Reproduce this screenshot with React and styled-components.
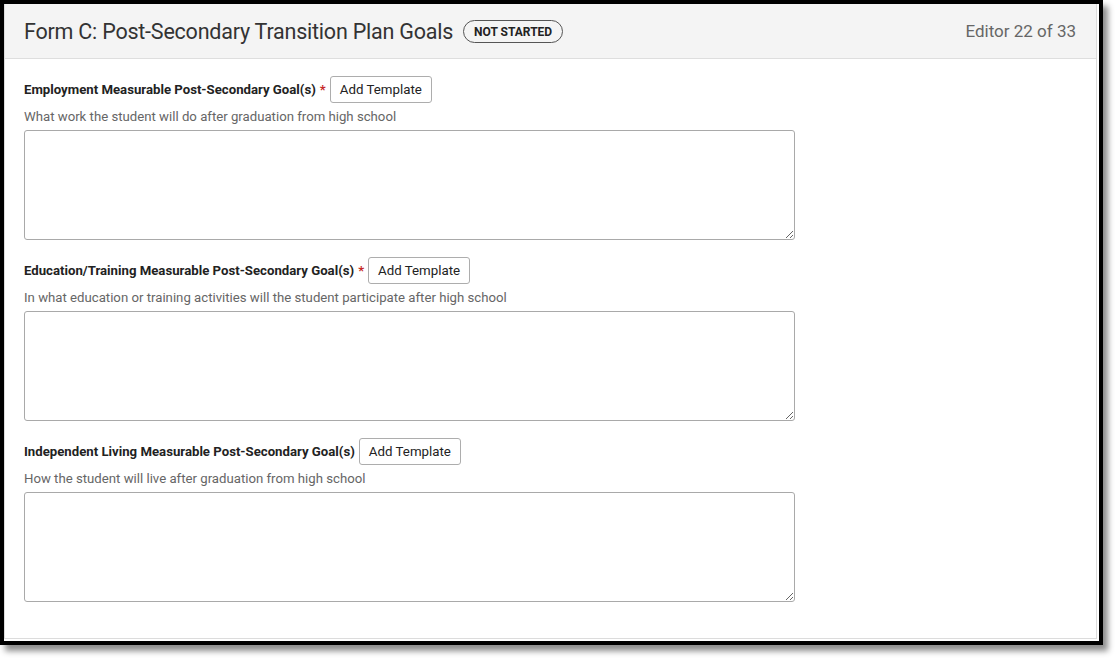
import React from "react";
import styled, { createGlobalStyle } from "styled-components";

const Global = createGlobalStyle`
  html, body { margin: 0; padding: 0; background: #fff; }
  body { font-family: Roboto, "Noto Sans", sans-serif; width: 1116px; height: 661px; overflow: hidden; }
  * { box-sizing: border-box; }
`;

const Frame = styled.div`
  width: 1103px;
  height: 645px;
  border: 4px solid #000;
  background: #fff;
  box-shadow: 5px 6px 6px rgba(0, 0, 0, 0.45);
  padding: 0 2px 2px 0;
  display: flex;
`;

const Panel = styled.div`
  flex: 1;
  border: 1px solid #dcdcdc;
  border-top: none;
  display: flex;
  flex-direction: column;
  background: #fff;
`;

const Header = styled.div`
  height: 55px;
  background: #f4f4f4;
  border-bottom: 1px solid #dedede;
  display: flex;
  align-items: center;
  padding: 0 20px 0 19px;
  gap: 10px;
`;

const Title = styled.h1`
  margin: 0;
  font-size: 21.5px;
  font-weight: 400;
  color: #333;
  letter-spacing: -0.22px;
`;

const Badge = styled.span`
  border: 1px solid #555;
  border-radius: 12px;
  height: 23px;
  padding: 0 10px;
  display: inline-flex;
  align-items: center;
  font-size: 12px;
  font-weight: 700;
  color: #222;
  margin-top: 1px;
`;

const Counter = styled.span`
  margin-left: auto;
  font-size: 17px;
  color: #666;
`;

const Body = styled.div`
  padding: 17px 19px 0 19px;
  display: flex;
  flex-direction: column;
  gap: 17px;
`;

const Field = styled.div`
  display: flex;
  flex-direction: column;
`;

const LabelRow = styled.div`
  display: flex;
  align-items: center;
  height: 27px;
`;

const Label = styled.label`
  font-size: 13.2px;
  font-weight: 700;
  color: #222;
`;

const Required = styled.span`
  color: #c62828;
  font-weight: 700;
  margin-left: 4px;
  font-size: 13px;
`;

const Button = styled.button`
  margin-left: 4px;
  height: 27px;
  padding: 0 9px;
  border: 1px solid #adadad;
  border-radius: 3px;
  background: #fff;
  font-family: Roboto, sans-serif;
  font-size: 13.3px;
  color: #222;
`;

const Help = styled.div`
  margin-top: 6px;
  font-size: 13.2px;
  line-height: 16px;
  color: #666;
`;

const Area = styled.textarea`
  margin-top: 5px;
  width: 771px;
  height: 110px;
  border: 1px solid #a9a9a9;
  border-radius: 3px;
  resize: vertical;
  font-family: Roboto, sans-serif;
`;

const fields = [
  {
    label: "Employment Measurable Post-Secondary Goal(s)",
    required: true,
    help: "What work the student will do after graduation from high school",
  },
  {
    label: "Education/Training Measurable Post-Secondary Goal(s)",
    required: true,
    help: "In what education or training activities will the student participate after high school",
  },
  {
    label: "Independent Living Measurable Post-Secondary Goal(s)",
    required: false,
    help: "How the student will live after graduation from high school",
  },
];

export default function App() {
  return (
    <>
      <Global />
      <Frame>
        <Panel>
          <Header>
            <Title>Form C: Post-Secondary Transition Plan Goals</Title>
            <Badge>NOT STARTED</Badge>
            <Counter>Editor 22 of 33</Counter>
          </Header>
          <Body>
            {fields.map((f) => (
              <Field key={f.label}>
                <LabelRow>
                  <Label>{f.label}</Label>
                  {f.required && <Required>*</Required>}
                  <Button>Add Template</Button>
                </LabelRow>
                <Help>{f.help}</Help>
                <Area />
              </Field>
            ))}
          </Body>
        </Panel>
      </Frame>
    </>
  );
}
